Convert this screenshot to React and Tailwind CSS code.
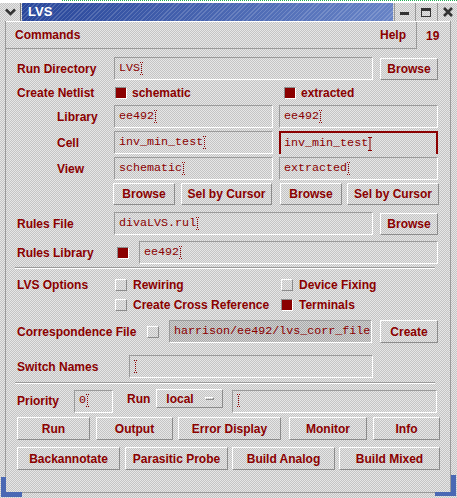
import React from 'react'

const DITHER = 'bg-[image:repeating-conic-gradient(#c4c4c4_0_25%,#e6e6e6_0_50%)] bg-[length:2px_2px]'
const DITHER_DARK = 'bg-[image:repeating-conic-gradient(#a9a9a9_0_25%,#d2d2d2_0_50%)] bg-[length:2px_2px]'
const RAISED = 'border border-t-white border-l-white border-b-[#8c8c8c] border-r-[#8c8c8c]'
const SUNKEN = 'border border-t-[#9a9a9a] border-l-[#9a9a9a] border-b-white border-r-white'
const RED = 'text-[#8b0000]'

function Caret({ solid }) {
  return (
    <svg width="4" height="14" viewBox="0 0 4 14" className="shrink-0">
      {solid ? (
        <g stroke="#8b0000" strokeWidth="1">
          <path d="M0 0.5h4M2 0.5v13M0 13.5h4" />
        </g>
      ) : (
        <g fill="#8b0000">
          <rect x="0" y="0" width="1" height="1" />
          <rect x="2" y="0" width="1" height="1" />
          <rect x="1" y="2" width="1" height="1" />
          <rect x="1" y="4" width="1" height="1" />
          <rect x="1" y="6" width="1" height="1" />
          <rect x="1" y="8" width="1" height="1" />
          <rect x="1" y="10" width="1" height="1" />
          <rect x="0" y="12" width="1" height="1" />
          <rect x="2" y="12" width="1" height="1" />
        </g>
      )}
    </svg>
  )
}

function Field({ className = '', text = '', focus, disabled, caret = true }) {
  const border = focus ? 'border-2 border-b-0 border-[#8b0000] pl-[3px]' : `${SUNKEN} pl-[4px]`
  return (
    <div className={`${className} h-[23px] ${disabled ? DITHER_DARK : DITHER} ${border} flex items-center overflow-hidden whitespace-nowrap font-['Liberation_Mono',monospace] text-[11.7px] ${RED}`}>
      <span>{text}</span>
      {caret && !disabled && <Caret solid={focus} />}
    </div>
  )
}

function Btn({ className = '', children }) {
  return (
    <div className={`${className} ${DITHER} ${RAISED} flex items-center justify-center font-bold text-[12px] ${RED}`}>
      {children}
    </div>
  )
}

function Check({ on }) {
  return on
    ? <div className="w-[12px] h-[12px] shrink-0 bg-[#8b0000] border border-t-[#8c8c8c] border-l-[#8c8c8c] border-b-white border-r-white" />
    : <div className={`w-[12px] h-[12px] shrink-0 ${DITHER} ${RAISED}`} />
}

function Label({ className = '', children }) {
  return <div className={`${className} shrink-0 font-bold text-[12px] ${RED} whitespace-nowrap`}>{children}</div>
}

function Sep() {
  return <div className="ml-[9px] w-[420px] h-[2px] border-t border-t-[#9a9a9a] border-b border-b-white" />
}

export default function App() {
  return (
    <div className={`relative w-[457px] h-[498px] overflow-hidden ${DITHER} font-['Liberation_Sans',Arial,sans-serif]`}>
      {/* top strip */}
      <div className="h-[3px] flex bg-white">
        <div className="w-[62px]" />
        <div className="flex-1 border-t border-dotted border-[#22aa55]" />
      </div>

      {/* title bar */}
      <div className="h-[18px] flex">
        <div className={`w-[21px] h-[18px] ${DITHER} border-r border-[#777] flex items-center justify-center`}>
          <svg width="11" height="8" viewBox="0 0 11 8">
            <path d="M1 1.5l4.5 4.5 4.5-4.5" fill="none" stroke="#333" strokeWidth="2.6" />
          </svg>
        </div>
        <div className="ml-px w-[371px] h-[18px] flex items-center pl-[6px] bg-[image:repeating-linear-gradient(135deg,rgba(255,255,255,0.16)_0_1px,transparent_1px_3px),linear-gradient(to_right,#28469a,#6783c6)]">
          <span className="text-white font-bold text-[13px]">LVS</span>
        </div>
        <div className={`ml-px w-[19px] h-[18px] ${DITHER} border-l border-[#999] flex items-center justify-center`}>
          <div className="w-[9px] h-[3px] bg-[#333] mt-[2px]" />
        </div>
        <div className={`ml-[2px] w-[20px] h-[18px] ${DITHER} border-l border-[#999] flex items-center justify-center`}>
          <div className="w-[10px] h-[9px] border border-[#333] border-t-[3px]" />
        </div>
        <div className={`ml-[2px] w-[20px] h-[18px] ${DITHER} border-l border-[#999] flex items-center justify-center`}>
          <svg width="10" height="10" viewBox="0 0 10 10">
            <path d="M1 1l8 8M9 1l-8 8" stroke="#333" strokeWidth="2.6" />
          </svg>
        </div>
      </div>

      {/* client area */}
      <div className="ml-[5px] w-[446px] h-[472px] border-l border-r border-b border-[#9a9a9a] flex flex-col">
        {/* menubar */}
        <div className="h-[28px] flex border-t border-t-white">
          <div className="w-[411px] h-[27px] border-b border-r border-[#9a9a9a] flex items-center justify-between pl-[9px] pr-[10px]">
            <Label>Commands</Label>
            <Label>Help</Label>
          </div>
          <Label className="ml-[9px] h-[27px] flex items-center">19</Label>
        </div>

        {/* Run Directory */}
        <div className="mt-[8px] h-[23px] flex items-center pl-[11px]">
          <Label className="w-[97px]">Run Directory</Label>
          <Field className="w-[259px]" text="LVS" />
          <Btn className="ml-[7px] w-[58px] h-[22px]">Browse</Btn>
        </div>

        {/* Create Netlist */}
        <div className="mt-[4px] h-[17px] flex items-center pl-[11px]">
          <Label className="w-[98px]">Create Netlist</Label>
          <div className="w-[169px] flex items-center">
            <Check on />
            <Label className="ml-[5px]">schematic</Label>
          </div>
          <Check on />
          <Label className="ml-[5px]">extracted</Label>
        </div>

        {/* Library / Cell / View */}
        <div className="mt-[4px] h-[23px] flex items-center pl-[11px]">
          <Label className="w-[97px] pl-[40px]">Library</Label>
          <Field className="w-[159px]" text="ee492" />
          <Field className="ml-[6px] w-[159px]" text="ee492" />
        </div>
        <div className="mt-[3px] h-[23px] flex items-center pl-[11px]">
          <Label className="w-[97px] pl-[40px]">Cell</Label>
          <Field className="w-[159px]" text="inv_min_test" />
          <Field className="ml-[6px] w-[159px]" text="inv_min_test" focus />
        </div>
        <div className="mt-[3px] h-[23px] flex items-center pl-[11px]">
          <Label className="w-[97px] pl-[40px]">View</Label>
          <Field className="w-[159px]" text="schematic" />
          <Field className="ml-[6px] w-[159px]" text="extracted" />
        </div>

        {/* browse row */}
        <div className="mt-[3px] h-[22px] flex pl-[107px]">
          <Btn className="w-[62px] h-[22px]">Browse</Btn>
          <Btn className="ml-[6px] w-[91px] h-[22px]">Sel by Cursor</Btn>
          <Btn className="ml-[8px] w-[62px] h-[22px]">Browse</Btn>
          <Btn className="ml-[5px] w-[92px] h-[22px]">Sel by Cursor</Btn>
        </div>

        {/* Rules File */}
        <div className="mt-[7px] h-[23px] flex items-center pl-[11px]">
          <Label className="w-[97px]">Rules File</Label>
          <Field className="w-[259px]" text="divaLVS.rul" />
          <Btn className="ml-[7px] w-[58px] h-[22px]">Browse</Btn>
        </div>

        {/* Rules Library */}
        <div className="mt-[6px] h-[23px] flex items-center pl-[11px]">
          <Label className="w-[100px]">Rules Library</Label>
          <Check on />
          <Field className="ml-[10px] w-[299px]" text="ee492" />
        </div>

        <div className="mt-[3px]"><Sep /></div>

        {/* LVS Options */}
        <div className="mt-[9px] h-[13px] flex items-center pl-[11px]">
          <Label className="w-[98px]">LVS Options</Label>
          <div className="w-[166px] flex items-center">
            <Check />
            <Label className="ml-[6px]">Rewiring</Label>
          </div>
          <Check />
          <Label className="ml-[6px]">Device Fixing</Label>
        </div>
        <div className="mt-[7px] h-[13px] flex items-center pl-[109px]">
          <div className="w-[166px] flex items-center">
            <Check />
            <Label className="ml-[6px]">Create Cross Reference</Label>
          </div>
          <Check on />
          <Label className="ml-[6px]">Terminals</Label>
        </div>

        {/* Correspondence File */}
        <div className="mt-[9px] h-[23px] flex items-center pl-[11px]">
          <Label className="w-[130px]">Correspondence File</Label>
          <Check />
          <Field className="ml-[10px] w-[203px]" text="harrison/ee492/lvs_corr_file" disabled />
          <Btn className="ml-[8px] w-[58px] h-[23px]">Create</Btn>
        </div>

        {/* Switch Names */}
        <div className="mt-[12px] h-[23px] flex items-center pl-[11px]">
          <Label className="w-[112px]">Switch Names</Label>
          <Field className="w-[244px]" />
        </div>

        <div className="mt-[4px]"><Sep /></div>

        {/* Priority / Run */}
        <div className="mt-[5px] h-[24px] flex items-center pl-[11px]">
          <Label className="w-[57px]">Priority</Label>
          <Field className="w-[39px]" text="0" />
          <div className="self-start h-[19px] flex items-center">
            <Label className="ml-[14px]">Run</Label>
            <div className={`ml-[6px] w-[67px] h-[19px] ${DITHER} ${RAISED} flex items-center justify-between pl-[9px] pr-[8px]`}>
              <Label>local</Label>
              <div className="w-[9px] h-[3px] border-t border-t-white border-b border-b-[#8c8c8c] border-l border-l-white border-r border-r-[#8c8c8c]" />
            </div>
          </div>
          <Field className="ml-[9px] w-[205px]" />
        </div>

        {/* action buttons */}
        <div className="mt-[4px] h-[23px] flex pl-[11px]">
          <Btn className="w-[73px] h-[23px]">Run</Btn>
          <Btn className="ml-[6px] w-[77px] h-[23px]">Output</Btn>
          <Btn className="ml-[5px] w-[103px] h-[23px]">Error Display</Btn>
          <Btn className="ml-[8px] w-[78px] h-[23px]">Monitor</Btn>
          <Btn className="ml-[6px] w-[67px] h-[23px]">Info</Btn>
        </div>
        <div className="mt-[7px] h-[23px] flex pl-[11px]">
          <Btn className="w-[103px] h-[23px]">Backannotate</Btn>
          <Btn className="ml-[5px] w-[103px] h-[23px]">Parasitic Probe</Btn>
          <Btn className="ml-[4px] w-[103px] h-[23px]">Build Analog</Btn>
          <Btn className="ml-[4px] w-[101px] h-[23px]">Build Mixed</Btn>
        </div>
      </div>

      {/* window manager resize corners */}
      <div className="absolute left-[1px] top-[477px] w-[21px] h-[20px] border-l-[5px] border-b-[5px] border-[#4a68b4]" />
      <div className="absolute left-[435px] top-[475px] w-[21px] h-[21px] border-r-[5px] border-b-[4px] border-[#4a68b4]" />
    </div>
  )
}
